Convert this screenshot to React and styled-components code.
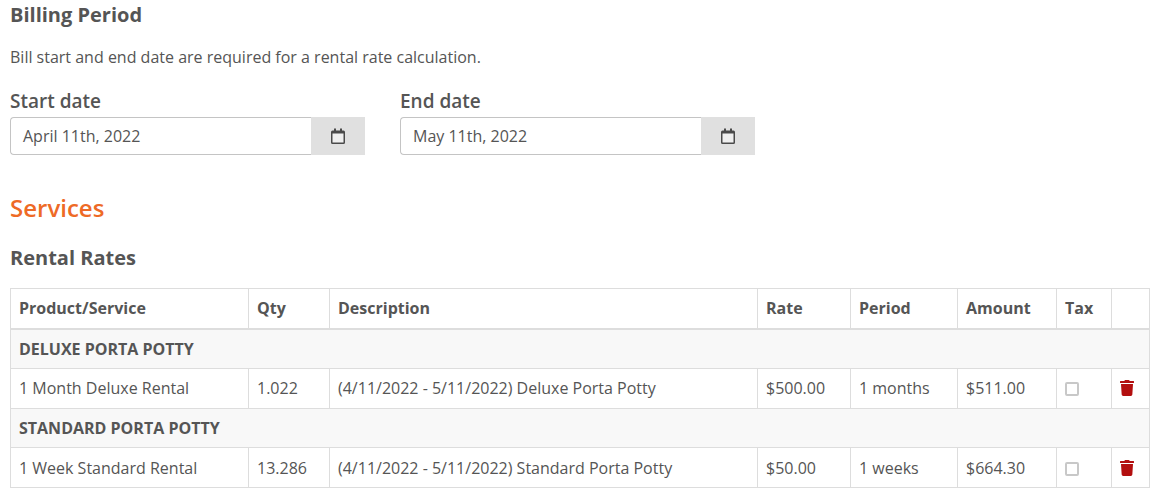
import React from "react"
import styled, { createGlobalStyle } from "styled-components"
import { FaTrash } from "react-icons/fa"

const GlobalStyle = createGlobalStyle`
    * { box-sizing: border-box; }
    body {
        margin: 0;
        background: #fff;
        color: #555;
        font-family: "Open Sans", "Liberation Sans", sans-serif;
        font-size: 16px;
        overflow: hidden;
    }
`

const Page = styled.div`
    padding: 0 9px 0 10px;
`

const SectionTitle = styled.h3`
    margin: 0;
    font-size: 20px;
    line-height: 30px;
    font-weight: 700;
    color: #555;
`

const Hint = styled.p`
    margin: 15px 0 0;
    line-height: 24px;
`

const DateRow = styled.div`
    display: flex;
    gap: 35px;
    margin-top: 18px;
`

const DateField = styled.div`
    width: 355px;
`

const DateLabel = styled.label`
    display: block;
    font-size: 19px;
    line-height: 29px;
    font-weight: 600;
    color: #555;
`

const InputGroup = styled.div`
    display: flex;
    height: 38px;
    margin-top: 1px;
`

const DateInput = styled.div`
    flex: 1;
    padding: 0 12px;
    display: flex;
    align-items: center;
    border: 1px solid #c4c4c4;
    border-right: 0;
    border-radius: 4px 0 0 4px;
`

const CalendarButton = styled.div`
    width: 54px;
    display: flex;
    align-items: center;
    justify-content: center;
    background: #e0e0e0;
`

const ServicesTitle = styled.h2`
    margin: 35px 0 0;
    font-size: 24px;
    line-height: 36px;
    font-weight: 600;
    color: #ee6a26;
`

const RatesTitle = styled(SectionTitle)`
    margin-top: 17px;
`

const Table = styled.table`
    width: 1139px;
    margin-top: 15px;
    border-collapse: collapse;
    table-layout: fixed;
`

const HeadCell = styled.th`
    height: 40px;
    padding: 0 8px;
    border: 1px solid #ddd;
    border-bottom-width: 2px;
    text-align: left;
    font-weight: 700;
    color: #555;
`

const GroupCell = styled.td`
    height: 39.5px;
    padding: 0 8px;
    border: 1px solid #ddd;
    background: #f8f8f8;
    font-weight: 700;
`

const Cell = styled.td`
    height: 40px;
    padding: 0 8px;
    border: 1px solid #ddd;
`

const TrashCell = styled(Cell)`
    padding-left: 7px;
`

const TaxBox = styled.span`
    display: block;
    width: 14px;
    height: 14px;
    margin-top: 2px;
    border: 2px solid #c8c8c8;
    border-radius: 2px;
`

const TrashIcon = styled(FaTrash)`
    display: block;
    color: #b30f0f;
    font-size: 16px;
`

const widths = [238, 81, 428, 93, 107, 99, 55, 38]
const headers = ["Product/Service", "Qty", "Description", "Rate", "Period", "Amount", "Tax", ""]

const groups = [
    {
        name: "DELUXE PORTA POTTY",
        row: ["1 Month Deluxe Rental", "1.022", "(4/11/2022 - 5/11/2022) Deluxe Porta Potty", "$500.00", "1 months", "$511.00"],
    },
    {
        name: "STANDARD PORTA POTTY",
        row: ["1 Week Standard Rental", "13.286", "(4/11/2022 - 5/11/2022) Standard Porta Potty", "$50.00", "1 weeks", "$664.30"],
    },
]

function CalendarIcon() {
    return (
        <svg width="14" height="16" viewBox="0 0 14 16">
            <path d="M3 0.5h2v2H9v-2h2v2h1.5A1.5 1.5 0 0 1 14 4v10.5a1.5 1.5 0 0 1-1.5 1.5h-11A1.5 1.5 0 0 1 0 14.5V4a1.5 1.5 0 0 1 1.5-1.5H3z" fill="#4a4a4a" />
            <rect x="1.5" y="5.5" width="11" height="9" fill="#efefef" />
        </svg>
    )
}

function DatePicker({ label, value }) {
    return (
        <DateField>
            <DateLabel>{label}</DateLabel>
            <InputGroup>
                <DateInput>{value}</DateInput>
                <CalendarButton><CalendarIcon /></CalendarButton>
            </InputGroup>
        </DateField>
    )
}

export default function App() {
    return (
        <Page>
            <GlobalStyle />
            <SectionTitle>Billing Period</SectionTitle>
            <Hint>Bill start and end date are required for a rental rate calculation.</Hint>
            <DateRow>
                <DatePicker label="Start date" value="April 11th, 2022" />
                <DatePicker label="End date" value="May 11th, 2022" />
            </DateRow>
            <ServicesTitle>Services</ServicesTitle>
            <RatesTitle>Rental Rates</RatesTitle>
            <Table>
                <colgroup>
                    {widths.map((w, i) => <col key={i} width={w} />)}
                </colgroup>
                <thead>
                    <tr>
                        {headers.map((h, i) => <HeadCell key={i}>{h}</HeadCell>)}
                    </tr>
                </thead>
                <tbody>
                    {groups.map(g => (
                        <React.Fragment key={g.name}>
                            <tr><GroupCell colSpan={8}>{g.name}</GroupCell></tr>
                            <tr>
                                {g.row.map((c, i) => <Cell key={i}>{c}</Cell>)}
                                <Cell><TaxBox /></Cell>
                                <TrashCell><TrashIcon /></TrashCell>
                            </tr>
                        </React.Fragment>
                    ))}
                </tbody>
            </Table>
        </Page>
    )
}
